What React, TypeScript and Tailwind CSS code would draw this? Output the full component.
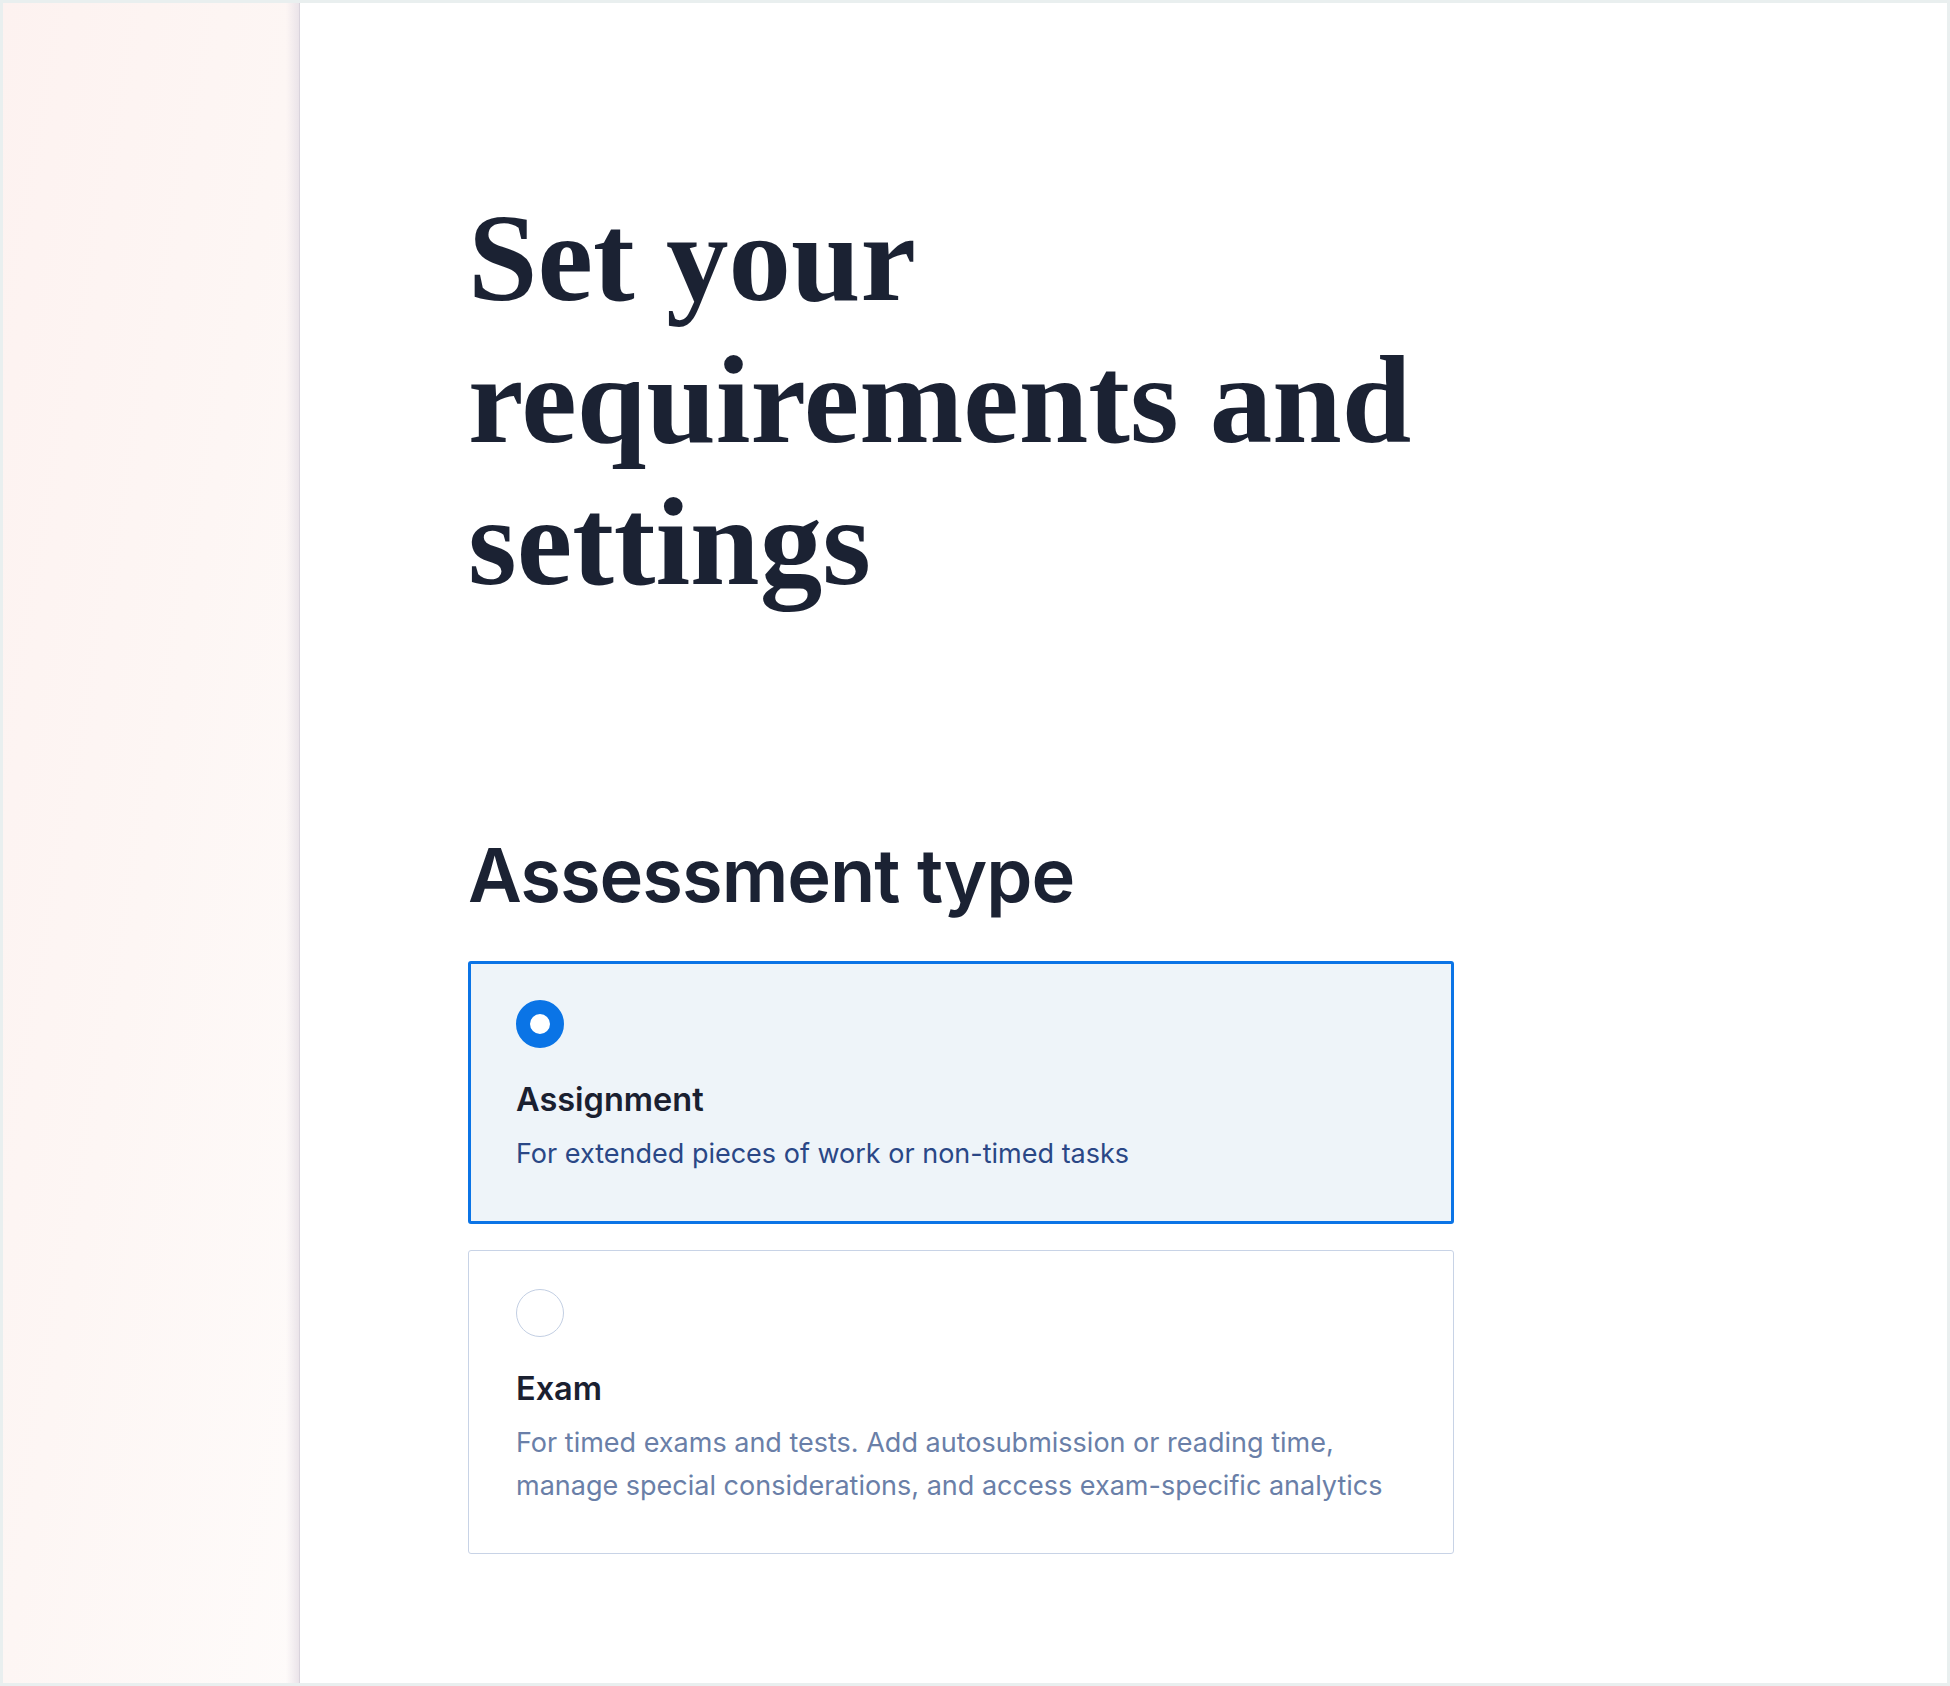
const sans = "font-['Inter','Noto_Sans',sans-serif]";

function Radio({ checked }: { checked: boolean }) {
  return checked ? (
    <span className="block h-12 w-12 rounded-full border-[14px] border-[#0a74e6] bg-white" />
  ) : (
    <span className="block h-12 w-12 rounded-full border-[1.5px] border-[#c3cfe3] bg-white" />
  );
}

export default function App() {
  return (
    <div className="h-[1686px] w-[1950px] bg-[#e9efef] p-[3px]">
      <div className="flex h-full w-full bg-white">
        <aside className="relative h-full w-[297px] shrink-0 bg-gradient-to-br from-[#fdf2f0] via-[#fdf6f4] to-[#fefbfa]">
          <div className="absolute inset-y-0 right-0 w-[14px] bg-gradient-to-r from-transparent to-[#e9e2e8]" />
          <div className="absolute inset-y-0 right-0 w-px bg-[#d9d3dc]" />
        </aside>
        <main className="flex-1 pl-[168px] pt-[184px]">
          <h1 className="font-['Liberation_Serif','Times_New_Roman',serif] text-[125px] font-bold leading-[142px] text-[#1b2233]">
            Set your
            <br />
            requirements and
            <br />
            settings
          </h1>
          <h2 className={`${sans} mt-[217px] text-[74px] font-semibold leading-[90px] tracking-[-1px] text-[#1b2233]`}>
            Assessment type
          </h2>
          <div className={`${sans} mt-[41px] flex w-[986px] flex-col gap-[26px]`}>
            <label className="block cursor-pointer rounded-[3px] border-[3px] border-[#0b74e6] bg-[#eef4f9] px-[45px] pb-[46px] pt-[36px]">
              <Radio checked />
              <p className="mt-[30px] text-[32.5px] font-semibold leading-[43px] text-[#1a2030]">Assignment</p>
              <p className="mt-[11px] text-[27px] leading-[43px] text-[#2a4786]">
                For extended pieces of work or non-timed tasks
              </p>
            </label>
            <label className="block cursor-pointer rounded-[3px] border border-[#c8d3e6] bg-white px-[47px] pb-[46px] pt-[38px]">
              <Radio checked={false} />
              <p className="mt-[30px] text-[32.5px] font-semibold leading-[43px] text-[#1a2030]">Exam</p>
              <p className="mt-[11px] whitespace-nowrap text-[27px] leading-[43px] text-[#6a7fa8]">
                For timed exams and tests. Add autosubmission or reading time,
                <br />
                manage special considerations, and access exam-specific analytics
              </p>
            </label>
          </div>
        </main>
      </div>
    </div>
  );
}
